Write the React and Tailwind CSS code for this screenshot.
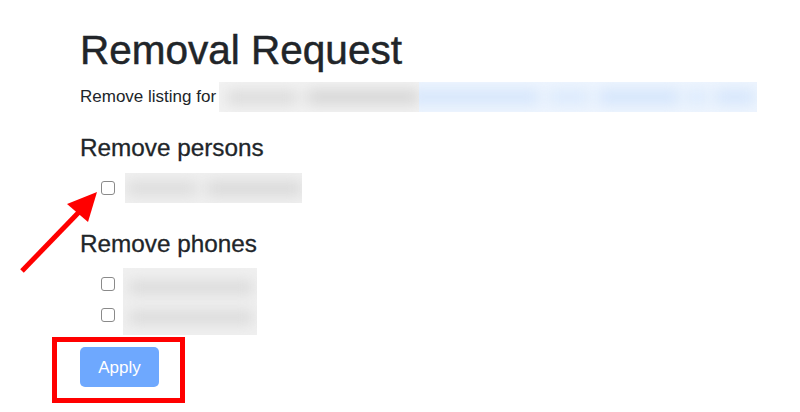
// blurred stand-in for redacted text
const Smudge = ({ className, bars }) => (
  <div className={`relative overflow-hidden ${className}`}>
    <div className="absolute inset-0 blur-[7px]">
      {bars.map((b, i) => (
        <div key={i} className={b} />
      ))}
    </div>
  </div>
);

const Checkbox = () => (
  <span className="block w-[14px] h-[14px] rounded-[3px] border border-[#8a8a8a] bg-white shrink-0" />
);

const App = () => {
  return (
    <div className="relative w-[800px] h-[412px] bg-white overflow-hidden text-[#212529] font-['Liberation_Sans',Arial,sans-serif]">
      <div className="pl-[80px] pt-[26px]">
        <h1 className="text-[40.5px] leading-[48px] font-medium [-webkit-text-stroke:0.5px_#212529]">Removal Request</h1>

        <div className="mt-[8px] flex items-center">
          <span className="text-[17px] leading-[24px]">Remove listing for</span>
          <div className="ml-[3px] flex h-[30px]">
            <Smudge
              className="w-[200px] h-[30px] bg-[#f2f2f2]"
              bars={[
                'absolute left-[8px] top-[9px] w-[70px] h-[13px] bg-[#d9d9d9]',
                'absolute left-[88px] top-[8px] w-[112px] h-[14px] bg-[#d4d4d4]',
              ]}
            />
            <Smudge
              className="w-[338px] h-[30px] bg-[#eef5fe]"
              bars={[
                'absolute left-[-10px] top-[8px] w-[130px] h-[14px] bg-[#d4e5fb]',
                'absolute left-[130px] top-[8px] w-[40px] h-[14px] bg-[#dae9fc]',
                'absolute left-[180px] top-[8px] w-[80px] h-[14px] bg-[#d2e4fb]',
                'absolute left-[268px] top-[8px] w-[20px] h-[14px] bg-[#dae9fc]',
                'absolute left-[296px] top-[8px] w-[40px] h-[14px] bg-[#d4e5fb]',
              ]}
            />
          </div>
        </div>

        <h4 className="mt-[21px] text-[24.3px] leading-[29px] font-medium [-webkit-text-stroke:0.3px_#212529]">Remove persons</h4>
        <div className="mt-[11px] flex items-center pl-[21px] gap-[10px]">
          <Checkbox />
          <Smudge
            className="w-[177px] h-[30px] bg-[#f0f0f0]"
            bars={[
              'absolute left-[2px] top-[9px] w-[70px] h-[13px] bg-[#dadada]',
              'absolute left-[82px] top-[9px] w-[95px] h-[13px] bg-[#d6d6d6]',
            ]}
          />
        </div>

        <h4 className="mt-[26px] text-[24.3px] leading-[29px] font-medium [-webkit-text-stroke:0.3px_#212529]">Remove phones</h4>
        <div className="mt-[10px] flex pl-[21px] gap-[8px]">
          <div className="flex flex-col gap-[17px] pt-[9px]">
            <Checkbox />
            <Checkbox />
          </div>
          <Smudge
            className="w-[134px] h-[67px] bg-[#f0f0f0]"
            bars={[
              'absolute left-[6px] top-[13px] w-[124px] h-[13px] bg-[#d9d9d9]',
              'absolute left-[6px] top-[43px] w-[124px] h-[13px] bg-[#d9d9d9]',
            ]}
          />
        </div>

        <button
          disabled
          className="mt-[12px] w-[79px] h-[40px] rounded-[5px] bg-[#6ea8fe] text-white text-[17px] leading-none"
        >
          Apply
        </button>
      </div>

      {/* annotation: red box around the button */}
      <div className="absolute left-[52px] top-[337px] w-[133px] h-[66px] border-[5px] border-[#ff0000]" />

      {/* annotation: red arrow to the checkbox */}
      <svg className="absolute left-0 top-0" width="800" height="412" viewBox="0 0 800 412">
        <line x1="22" y1="271" x2="80" y2="211" stroke="#ff0000" strokeWidth="5" />
        <polygon points="97,192 67,204 88,222" fill="#ff0000" />
      </svg>
    </div>
  );
};

export default App;
